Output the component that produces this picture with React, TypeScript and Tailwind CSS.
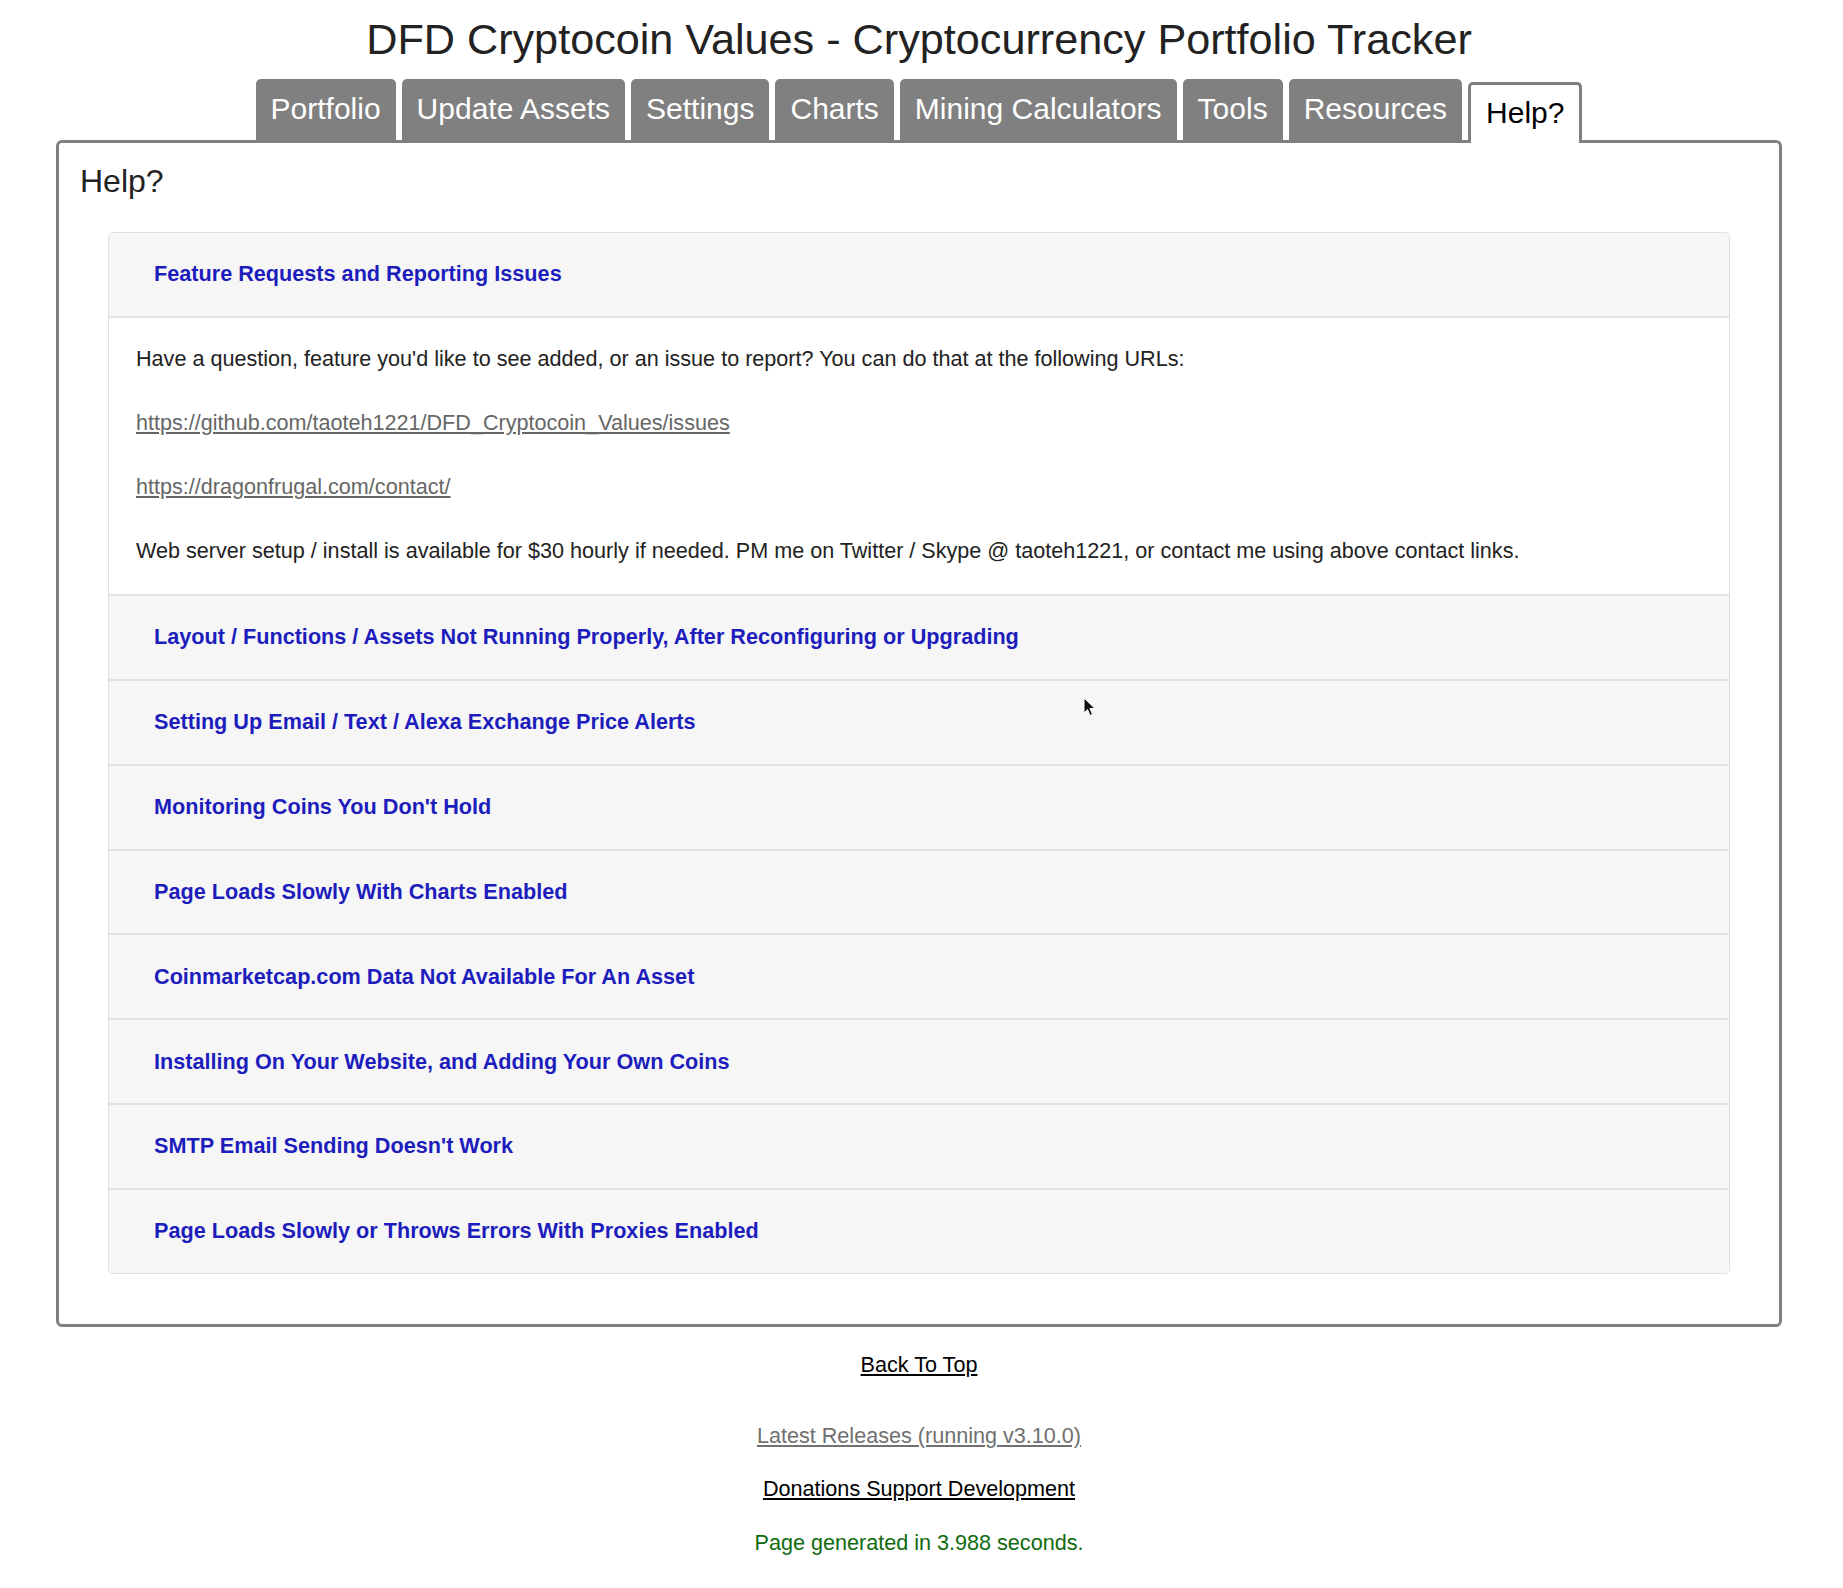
const tabs = [
  'Portfolio',
  'Update Assets',
  'Settings',
  'Charts',
  'Mining Calculators',
  'Tools',
  'Resources',
]

const sections = [
  'Layout / Functions / Assets Not Running Properly, After Reconfiguring or Upgrading',
  'Setting Up Email / Text / Alexa Exchange Price Alerts',
  "Monitoring Coins You Don't Hold",
  'Page Loads Slowly With Charts Enabled',
  'Coinmarketcap.com Data Not Available For An Asset',
  'Installing On Your Website, and Adding Your Own Coins',
  "SMTP Email Sending Doesn't Work",
  'Page Loads Slowly or Throws Errors With Proxies Enabled',
]

function SectionHeader({ title, first }: { title: string; first?: boolean }) {
  return (
    <div
      className={`h-[84.9px] flex items-center pl-[45px] bg-[#f6f6f6] border-[#e2e2e2] ${
        first ? 'border-b-2' : 'border-t-2'
      }`}
    >
      <a href="#" className="text-[21.65px] font-bold text-[#1d1dbd]">
        {title}
      </a>
    </div>
  )
}

export default function App() {
  return (
    <div className="relative min-h-[1588px] bg-white text-[#222] font-['Liberation_Sans',Arial,sans-serif]">
      <div className="pl-[56px] pr-[61px]">
        {/* Title */}
        <h1 className="pt-[15px] pb-[15px] text-center text-[43.2px] leading-[49px] text-[#222]">
          DFD Cryptocoin Values - Cryptocurrency Portfolio Tracker
        </h1>

        {/* Tabs */}
        <div className="relative z-10 -mb-[3px] flex items-end justify-center gap-[6px]">
          {tabs.map((t) => (
            <div
              key={t}
              className="h-[61px] mb-[3px] px-[15px] flex items-center rounded-t-[5px] bg-[#808080] text-white text-[30px] pb-[3px]"
            >
              {t}
            </div>
          ))}
          <div className="h-[61px] px-[15px] pb-[4px] flex items-center rounded-t-[5px] bg-white border-[3px] border-b-0 border-[#808080] text-black text-[30px]">
            Help?
          </div>
        </div>

        {/* Panel */}
        <div className="border-[3px] border-[#808080] rounded-[6px] p-[20px] pb-[21px]">
          <h2 className="px-[1px] text-[32px] leading-[37px] text-[#222]">Help?</h2>

          <div className="mx-[29px] mt-[32px] mb-[29px] border border-[#e0e0e0] rounded-[5px] overflow-hidden">
            <SectionHeader title="Feature Requests and Reporting Issues" first />
            <div className="bg-white px-[27px] pt-[28px] pb-[30px] text-[21.6px] leading-[26px] text-[#222] space-y-[38px]">
              <p>
                Have a question, feature you'd like to see added, or an issue to report? You can do that at the
                following URLs:
              </p>
              <p>
                <a href="#" className="underline text-[#666]">
                  https://github.com/taoteh1221/DFD_Cryptocoin_Values/issues
                </a>
              </p>
              <p>
                <a href="#" className="underline text-[#666]">
                  https://dragonfrugal.com/contact/
                </a>
              </p>
              <p>
                Web server setup / install is available for $30 hourly if needed. PM me on Twitter / Skype @
                taoteh1221, or contact me using above contact links.
              </p>
            </div>
            {sections.map((s) => (
              <SectionHeader key={s} title={s} />
            ))}
          </div>
        </div>

        {/* Footer */}
        <div className="flex flex-col items-center text-[21.6px] leading-[25px] pt-[25px]">
          <a href="#" className="underline text-black">
            Back To Top
          </a>
          <a href="#" className="underline text-[#707070] mt-[46px]">
            Latest Releases (running v3.10.0)
          </a>
          <a href="#" className="underline text-black mt-[28px]">
            Donations Support Development
          </a>
          <p className="text-[#0f6a10] mt-[29px]">Page generated in 3.988 seconds.</p>
        </div>
      </div>

      {/* mouse pointer */}
      <svg className="absolute left-[1083px] top-[697px]" width="14" height="20" viewBox="0 0 14 20">
        <path d="M1 1 L1 16 L4.5 12.5 L7 18.5 L9.5 17.5 L7 11.5 L12 11.5 Z" fill="#111" stroke="#fff" strokeWidth="1" />
      </svg>
    </div>
  )
}
